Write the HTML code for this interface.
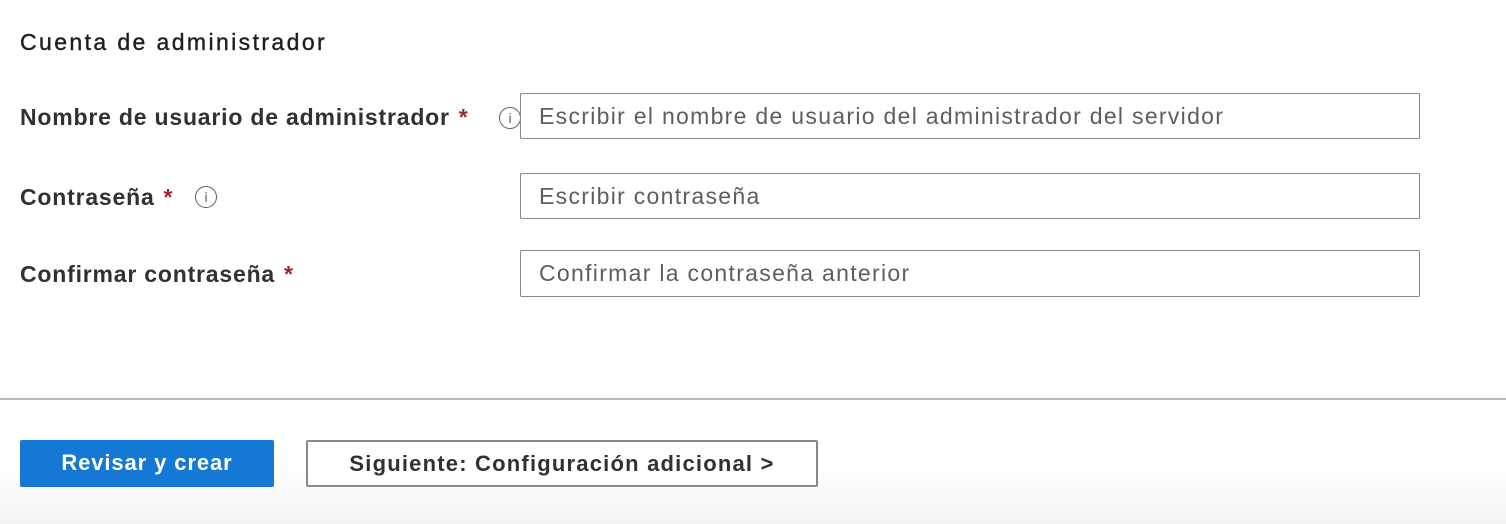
<!DOCTYPE html>
<html><head><meta charset="utf-8"><style>
body{margin:0;width:1506px;height:524px;position:relative;background:#fff;font-family:"Liberation Sans",sans-serif;color:#323130;overflow:hidden}
.a{position:absolute;white-space:nowrap}
h1{position:absolute;left:20px;top:29px;margin:0;font-size:23px;font-weight:normal;letter-spacing:2.4px;color:#201f1e;-webkit-text-stroke:0.4px #201f1e}
.lbl{font-size:23px;font-weight:bold;letter-spacing:0.8px;color:#323130}
.star{color:#a4262c;margin-left:9px}
.inp{position:absolute;left:520px;width:900px;height:46px;border:1px solid #8a8886;border-radius:2px;box-sizing:border-box;padding-left:18px;line-height:44px;font-size:23px;letter-spacing:1.3px;color:#605e5c}
.info{position:absolute;width:22px;height:22px;border:1.3px solid #605e5c;border-radius:50%;box-sizing:border-box;font-size:14px;line-height:20px;text-align:center;color:#605e5c;font-family:"Liberation Sans",sans-serif}
.btn{position:absolute;top:440px;height:47px;box-sizing:border-box;border-radius:2px;font-size:22px;font-weight:bold;text-align:center;line-height:46px}
</style></head><body>
<h1>Cuenta de administrador</h1>
<div class="a lbl" style="left:20px;top:104px">Nombre de usuario de administrador<span class="star">*</span></div>
<div class="info" style="left:499px;top:107px">i</div>
<div class="inp" style="top:93px">Escribir el nombre de usuario del administrador del servidor</div>
<div class="a lbl" style="left:20px;top:184px">Contraseña<span class="star">*</span></div>
<div class="info" style="left:195px;top:186px">i</div>
<div class="inp" style="top:173px">Escribir contraseña</div>
<div class="a lbl" style="left:20px;top:261px">Confirmar contraseña<span class="star">*</span></div>
<div class="inp" style="top:250px;height:47px">Confirmar la contraseña anterior</div>
<div style="position:absolute;left:0;top:398px;width:1506px;height:2px;background:#b8b8b8"></div>
<div style="position:absolute;left:0;top:470px;width:1506px;height:54px;background:linear-gradient(#fff,#f3f3f3)"></div>
<div class="btn" style="left:20px;width:254px;background:#1478d4;color:#fff;letter-spacing:0.9px">Revisar y crear</div>
<div class="btn" style="left:306px;width:512px;background:#fff;border:2px solid #8a8886;color:#323130;line-height:43px;letter-spacing:1.2px">Siguiente: Configuración adicional &gt;</div>
</body></html>
